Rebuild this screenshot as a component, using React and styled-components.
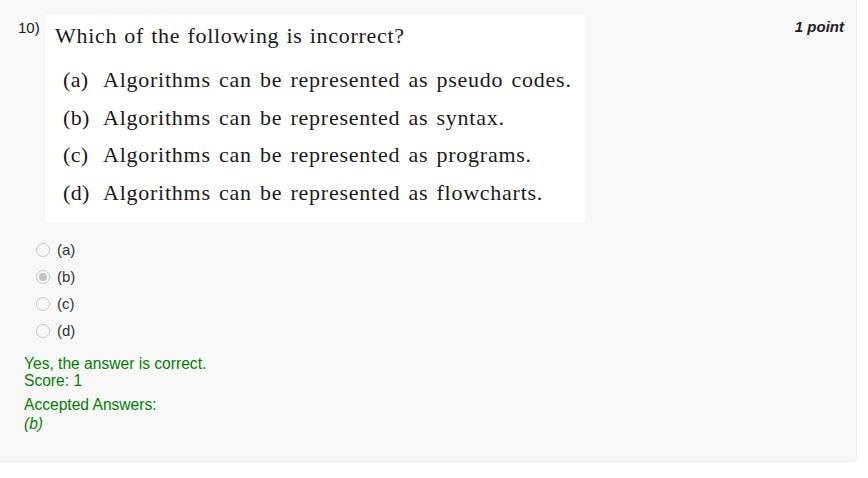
import React from 'react';
import styled, { createGlobalStyle } from 'styled-components';

const GlobalStyle = createGlobalStyle`
  html, body {
    margin: 0;
    padding: 0;
    background: #ffffff;
  }
  body {
    font-family: "Liberation Sans", Arial, sans-serif;
  }
`;

const Card = styled.div`
  box-sizing: border-box;
  width: 857px;
  height: 462px;
  background: #f8f8f8;
  border-right: 1px solid #ececec;
  border-bottom: 1px solid #ececec;
  border-bottom-right-radius: 5px;
  padding: 15px 0 0 0;
`;

const Header = styled.div`
  display: flex;
  align-items: flex-start;
`;

const QNum = styled.div`
  width: 27px;
  padding: 4px 0 0 18px;
  box-sizing: content-box;
  font-size: 15px;
  color: #222;
  flex-shrink: 0;
`;

const QuestionImage = styled.div`
  width: 540px;
  height: 207px;
  background: #ffffff;
  font-family: "Liberation Serif", "Times New Roman", serif;
  color: #1a1a1a;
  box-sizing: border-box;
  padding: 7px 0 0 10px;
`;

const Prompt = styled.div`
  font-size: 22px;
  letter-spacing: 0.7px;
  word-spacing: 1px;
  line-height: 28px;
  margin-bottom: 11px;
`;

const OptionLine = styled.div`
  display: flex;
  font-size: 22px;
  letter-spacing: 0.75px;
  word-spacing: 2px;
  line-height: 37.5px;
  padding-left: 8px;
`;

const OptLabel = styled.span`
  width: 40px;
  flex-shrink: 0;
  letter-spacing: 0.35px;
`;

const Points = styled.div`
  margin-left: auto;
  margin-right: 12px;
  padding-top: 3px;
  font-size: 15px;
  font-weight: bold;
  font-style: italic;
  color: #222;
`;

const Choices = styled.div`
  display: flex;
  flex-direction: column;
  gap: 6px;
  padding: 17px 0 0 36px;
`;

const Choice = styled.label`
  display: flex;
  align-items: center;
  gap: 7px;
  height: 21px;
  font-size: 15px;
  color: #333;
`;

const Radio = styled.span`
  box-sizing: border-box;
  width: 14px;
  height: 14px;
  border-radius: 50%;
  border: 1px solid #c9c9c9;
  background: #f7f7f7;
  display: flex;
  align-items: center;
  justify-content: center;

  &::after {
    content: '';
    width: 8px;
    height: 8px;
    border-radius: 50%;
    background: ${p => (p.$checked ? '#c2c2c2' : 'transparent')};
  }
`;

const Feedback = styled.div`
  padding: 14px 0 0 24px;
  color: #008000;
  font-size: 15.6px;
  line-height: 17px;
`;

const Accepted = styled.div`
  margin-top: 7px;
`;

const AnswerText = styled.div`
  font-style: italic;
  margin-top: 2px;
`;

const options = [
  ['(a)', 'Algorithms can be represented as pseudo codes.'],
  ['(b)', 'Algorithms can be represented as syntax.'],
  ['(c)', 'Algorithms can be represented as programs.'],
  ['(d)', 'Algorithms can be represented as flowcharts.'],
];

export default function App() {
  return (
    <>
      <GlobalStyle />
      <Card>
        <Header>
          <QNum>10)</QNum>
          <QuestionImage>
            <Prompt>Which of the following is incorrect?</Prompt>
            {options.map(([l, t]) => (
              <OptionLine key={l}>
                <OptLabel>{l}</OptLabel>
                <span>{t}</span>
              </OptionLine>
            ))}
          </QuestionImage>
          <Points>1 point</Points>
        </Header>
        <Choices>
          {['(a)', '(b)', '(c)', '(d)'].map(l => (
            <Choice key={l}>
              <Radio $checked={l === '(b)'} />
              {l}
            </Choice>
          ))}
        </Choices>
        <Feedback>
          <div>Yes, the answer is correct.</div>
          <div>Score: 1</div>
          <Accepted>Accepted Answers:</Accepted>
          <AnswerText>(b)</AnswerText>
        </Feedback>
      </Card>
    </>
  );
}
